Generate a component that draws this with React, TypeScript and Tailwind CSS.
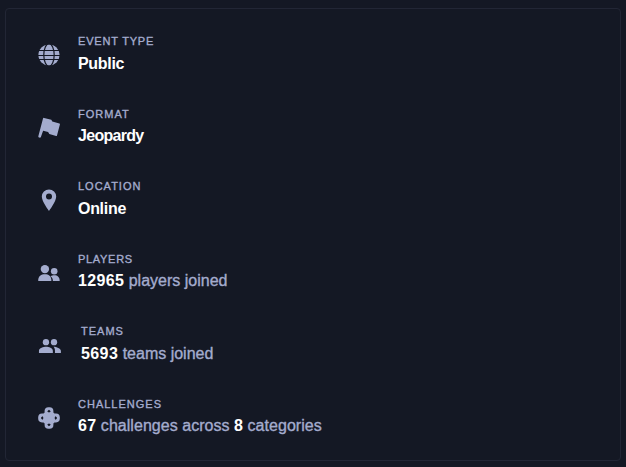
import type { ReactNode } from "react";

function GlobeIcon() {
  return (
    <svg width="22" height="22" viewBox="0 0 22 22">
      <circle cx="11" cy="11" r="10.6" fill="#a4acce" />
      <g fill="none" stroke="#141824" strokeWidth="1.2">
        <ellipse cx="11" cy="11" rx="5.2" ry="11.4" />
        <path d="M0 6.500h22M0 11.500h22M0 15.500h22" />
      </g>
    </svg>
  );
}

function FlagIcon() {
  return (
    <svg width="22" height="22" viewBox="0 0 22 22" fill="#a4acce">
      <path d="M5 1.400Q5.300.7 6.100.9L13.300 2.800l1 1.800 7.100 1.900q.7.200.5.900l-2.900 11q-.2.700-.9.500l-6.800-1.800-1.200-2-5-1.300L2.900 20q-.3.900-1.600.6T.4 19Z" />
    </svg>
  );
}

function PinIcon() {
  return (
    <svg width="16" height="22" viewBox="0 0 16 22" fill="#a4acce">
      <path fillRule="evenodd" d="M8 .4a7.200 7.200 0 0 0-7.200 7.200C.8 12.700 8 22 8 22s7.200-9.300 7.200-14.400A7.200 7.200 0 0 0 8 .4Zm0 4.200a3 3 0 1 1 0 6 3 3 0 0 1 0-6Z" />
    </svg>
  );
}

function PlayersIcon() {
  return (
    <svg width="22" height="18" viewBox="0 0 22 18" fill="#a4acce">
      <circle cx="6.900" cy="5.100" r="4.200" />
      <circle cx="16.200" cy="7.300" r="3.300" />
      <path d="M.2 16.600C.2 12 3.200 10.200 6.900 10.200s6.500 1.800 6.500 6.400q0 .5-.6.500H.8q-.6 0-.6-.5ZM12.600 12.300c1.100-.8 2.300-1.100 3.700-1.100 3.300 0 5.400 2 5.400 5.300q0 .6-.6.600h-6.200c0-2-.8-3.700-2.300-4.800Z" />
    </svg>
  );
}

function TeamsIcon() {
  return (
    <svg width="24" height="16" viewBox="0 0 24 16" fill="#a4acce">
      <circle cx="8.300" cy="4" r="3.300" />
      <circle cx="16.700" cy="4" r="3.300" />
      <path d="M1 15.300v-2.200c0-3 4.800-4.300 7.500-4.300s7 1.300 7 4.300v2.200Zm15.200-6.400c3 .2 7.700 1.500 7.700 4.400v2h-6.200v-2.200c0-1.700-.5-3.100-1.500-4.200Z" />
    </svg>
  );
}

function ChallengesIcon() {
  return (
    <svg width="22" height="22" viewBox="0 0 22 22">
      <g fill="#a4acce">
        <rect x="6.600" y=".2" width="8.800" height="21.600" rx="3.800" />
        <rect x=".2" y="6.600" width="21.600" height="8.800" rx="3.800" />
        <rect x="5.800" y="5.800" width="10.400" height="10.400" />
      </g>
      <path fill="#141824" d="M11 2.800l1.700 1.500-.8.900h-1.800l-.8-.9ZM11 19.200l1.700-1.500-.8-.9h-1.800l-.8.900ZM2.800 11l1.500-1.700.9.800v1.800l-.9.800ZM19.200 11l-1.500-1.700-.9.800v1.800l.9.800Z" />
    </svg>
  );
}

type RowProps = { icon: ReactNode; label: string; labelClass: string; children: ReactNode; wide?: boolean };

function InfoRow({ icon, label, labelClass, children, wide }: RowProps) {
  return (
    <div className="flex h-[72.6px] items-start">
      <div className={`flex shrink-0 items-center justify-center ${wide ? "mr-5 h-[46px] w-[23px]" : "mr-[18px] h-[44px] w-[22px]"}`}>{icon}</div>
      <div className="whitespace-nowrap [-webkit-text-stroke:0.35px_currentColor]">
        <div className={`h-[18.5px] text-[11px] leading-4 text-[#a4acce] ${labelClass}`}>{label}</div>
        <div className="text-[16px] leading-6 text-[#a4acce]">{children}</div>
      </div>
    </div>
  );
}

function Strong({ className, children }: { className: string; children: ReactNode }) {
  return <span className={`font-bold text-white [-webkit-text-stroke:0px] ${className}`}>{children}</span>;
}

export default function App() {
  return (
    <main className="h-[467px] w-[626px] overflow-hidden bg-[#141824] pt-2 pl-[5px] font-['Liberation_Sans',Arial,sans-serif]">
      <section className="h-[453px] w-[616px] overflow-hidden rounded-[4px] border border-[#222635] pt-6 pl-8">
        <InfoRow icon={<GlobeIcon />} label="EVENT TYPE" labelClass="tracking-[0.8px]">
          <Strong className="tracking-[-0.3px]">Public</Strong>
        </InfoRow>
        <InfoRow icon={<FlagIcon />} label="FORMAT" labelClass="tracking-[1px]">
          <Strong className="tracking-[-0.7px]">Jeopardy</Strong>
        </InfoRow>
        <InfoRow icon={<PinIcon />} label="LOCATION" labelClass="tracking-[1px]">
          <Strong className="tracking-[-0.3px]">Online</Strong>
        </InfoRow>
        <InfoRow icon={<PlayersIcon />} label="PLAYERS" labelClass="tracking-[0.7px]">
          <Strong className="tracking-[0.35px]">12965</Strong> players joined
        </InfoRow>
        <InfoRow icon={<TeamsIcon />} label="TEAMS" labelClass="tracking-[1px]" wide>
          <Strong className="tracking-[0.4px]">5693</Strong> teams joined
        </InfoRow>
        <InfoRow icon={<ChallengesIcon />} label="CHALLENGES" labelClass="tracking-[1px]">
          <Strong className="tracking-[0.3px]">67</Strong> <span className="tracking-[0.04px]">challenges across <Strong className="">8</Strong> categories</span>
        </InfoRow>
      </section>
    </main>
  );
}
